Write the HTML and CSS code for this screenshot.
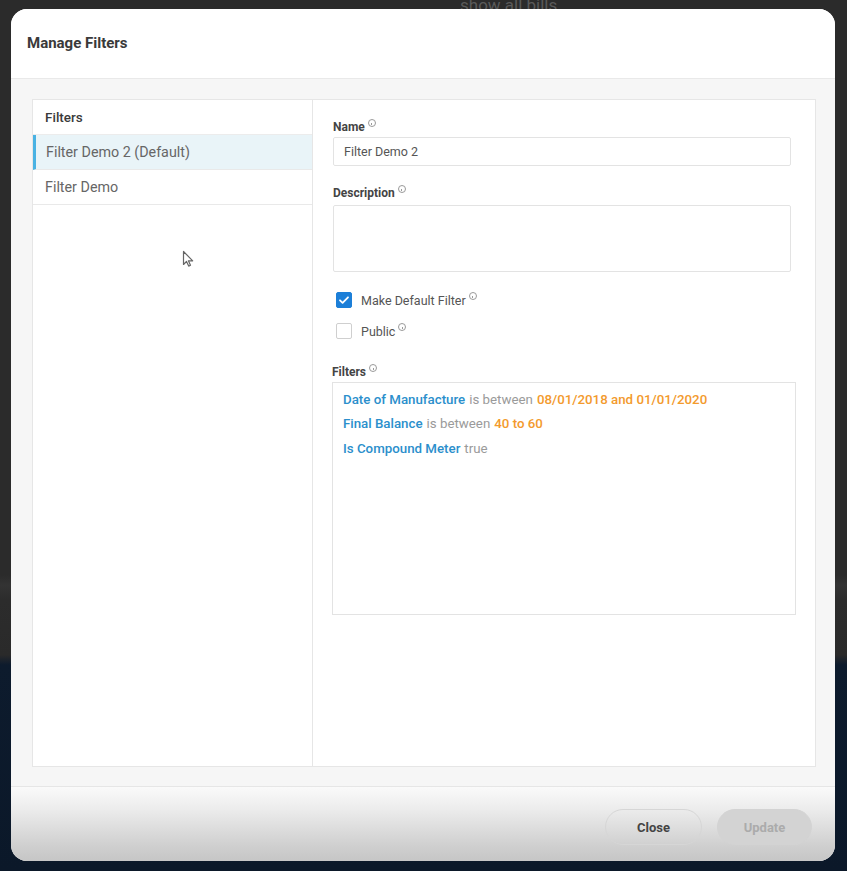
FILE: index.html
```html
<!DOCTYPE html>
<html>
<head>
<meta charset="utf-8">
<link rel="stylesheet" href="styles.css">
</head>
<body>
<div class="topbar"><span class="topbar-text">show all bills</span></div>
<div class="modal">
  <div class="modal-header">Manage Filters</div>
  <div class="modal-body">
    <div class="panel">
      <div class="list">
        <div class="list-head">Filters</div>
        <div class="list-item selected">Filter Demo 2 (Default)</div>
        <div class="list-item">Filter Demo</div>
      </div>
      <div class="form">
        <div class="label">Name<span class="info"></span></div>
        <div class="input">Filter Demo 2</div>
        <div class="label mt">Description<span class="info"></span></div>
        <div class="textarea"></div>
        <div class="check-row first">
          <span class="cb checked"><svg viewBox="0 0 16 16" width="16" height="16"><path d="M4 8.3l2.6 2.5L12 5.3" fill="none" stroke="#fff" stroke-width="1.8" stroke-linecap="round" stroke-linejoin="round"/></svg></span>
          <span class="cb-label">Make Default Filter<span class="info"></span></span>
        </div>
        <div class="check-row">
          <span class="cb"></span>
          <span class="cb-label">Public<span class="info"></span></span>
        </div>
        <div class="label filters-label">Filters<span class="info"></span></div>
        <div class="filters-box">
          <div class="rule"><span class="field">Date of Manufacture</span> <span class="op">is between</span> <span class="val">08/01/2018 and 01/01/2020</span></div>
          <div class="rule"><span class="field">Final Balance</span> <span class="op">is between</span> <span class="val">40 to 60</span></div>
          <div class="rule"><span class="field">Is Compound Meter</span> <span class="op">true</span></div>
        </div>
      </div>
    </div>
  </div>
  <div class="modal-footer">
    <button class="btn btn-close">Close</button>
    <button class="btn btn-update">Update</button>
  </div>
</div>
<svg class="cursor" width="14" height="20" viewBox="0 0 14 20"><path d="M1.5 1.5v13l3-3 2.2 4.6 1.8-.8-2.1-4.5h4.3z" fill="#fff" stroke="#666" stroke-width="1.2" stroke-linejoin="round"/></svg>
</body>
</html>
```
FILE: styles.css
```css
* { box-sizing: border-box; }
html, body { margin: 0; padding: 0; }
body {
  width: 847px;
  height: 871px;
  overflow: hidden;
  position: relative;
  font-family: Roboto, "Noto Sans", "Liberation Sans", sans-serif;
  background: linear-gradient(to bottom, #2b2b2b 0, #2b2b2b 575px, #333 585px, #2c2c2c 600px, #2a2a2a 655px, #0d1b2d 665px, #0b1829 871px);
}
.topbar {
  height: 9px;
  overflow: hidden;
  padding-left: 460px;
}
.topbar-text {
  display: block;
  font-size: 17px;
  line-height: 10px;
  color: #5a5a5a;
}
.modal {
  margin-left: 11px;
  width: 824px;
  height: 852px;
  border-radius: 16px;
  overflow: hidden;
  display: flex;
  flex-direction: column;
  background: #f6f6f6;
}
.modal-header {
  height: 70px;
  flex: none;
  background: #fff;
  border-bottom: 1px solid #e9e9e9;
  display: flex;
  align-items: center;
  padding-left: 16px;
  padding-bottom: 2px;
  font-size: 15px;
  font-weight: 700;
  color: #3a3a3a;
}
.modal-body {
  flex: 1;
  padding: 20px 19px 19px 21px;
  display: flex;
}
.panel {
  flex: 1;
  display: flex;
  background: #fff;
  border: 1px solid #e6e6e6;
}
.list {
  width: 280px;
  flex: none;
  border-right: 1px solid #e6e6e6;
}
.list-head {
  height: 35px;
  display: flex;
  align-items: center;
  padding-left: 12px;
  font-size: 13.5px;
  font-weight: 500;
  color: #3a3a3a;
  border-bottom: 1px solid #ececec;
}
.list-item {
  height: 35px;
  display: flex;
  align-items: center;
  padding-left: 12px;
  font-size: 14.3px;
  color: #666;
  border-bottom: 1px solid #e9e9e9;
}
.list-item.selected {
  background: #e9f4f8;
  border-left: 3px solid #49b2e3;
  padding-left: 10px;
}
.form {
  flex: 1;
  padding: 20px 24px 0 20px;
}
.label {
  height: 14px;
  display: flex;
  align-items: center;
  font-size: 12px;
  font-weight: 700;
  color: #444;
}
.label.mt { margin-top: 20px; }
.info {
  display: inline-block;
  width: 8px;
  height: 8px;
  border: 1px solid #9a9a9a;
  border-radius: 50%;
  margin-left: 3px;
  margin-top: -8px;
  position: relative;
}
.info::after {
  content: "";
  position: absolute;
  left: 2.5px;
  top: 2.5px;
  width: 1px;
  height: 2px;
  background: #9a9a9a;
}
.input {
  margin-top: 3px;
  height: 29px;
  border: 1px solid #e3e3e3;
  border-radius: 2px;
  display: flex;
  align-items: center;
  padding-left: 10px;
  font-size: 12.5px;
  color: #555;
}
.textarea {
  margin-top: 5px;
  height: 67px;
  border: 1px solid #e3e3e3;
  border-radius: 2px;
}
.check-row {
  display: flex;
  align-items: center;
  height: 16px;
  margin-top: 15px;
  padding-left: 3px;
}
.check-row.first { margin-top: 20px; }
.cb {
  width: 16px;
  height: 16px;
  border: 1px solid #cfcfcf;
  border-radius: 2px;
  background: #fff;
  flex: none;
  display: flex;
}
.cb.checked {
  background: #1c7fd8;
  border-color: #1c7fd8;
}
.cb svg { margin: -1px; }
.cb-label {
  margin-left: 9px;
  font-size: 12.5px;
  color: #555;
  display: flex;
  align-items: center;
}
.filters-label { margin-top: 26px; margin-left: -1px; }
.filters-box {
  margin-top: 3px;
  margin-left: -1px;
  margin-right: -5px;
  height: 233px;
  border: 1px solid #e3e3e3;
  padding: 4px 0 0 10px;
}
.rule {
  height: 24.5px;
  display: flex;
  align-items: center;
  gap: 4px;
  font-size: 13.3px;
}
.field { color: #2b8fcc; font-weight: 500; }
.op { color: #9a9a9a; }
.val { color: #f39a2d; font-weight: 500; }
.modal-footer {
  height: 75px;
  flex: none;
  border-top: 1px solid #e6e6e6;
  background: linear-gradient(to bottom, #fafafa 0%, #ececec 30%, #cfcfcf 80%, #c6c6c6 100%);
  display: flex;
  justify-content: flex-end;
  align-items: flex-start;
  padding: 22px 23px 0 0;
  gap: 15px;
}
.btn {
  height: 36px;
  border-radius: 18px;
  font-family: Roboto, "Liberation Sans", sans-serif;
  font-size: 13px;
  font-weight: 700;
}
.btn-close {
  width: 97px;
  background: transparent;
  border: 1px solid #d6d6d6;
  color: #444;
}
.btn-update {
  width: 95px;
  background: #d3d3d3;
  border: 1px solid #d3d3d3;
  color: #ababab;
}
.cursor {
  position: absolute;
  left: 182px;
  top: 250px;
}
```
